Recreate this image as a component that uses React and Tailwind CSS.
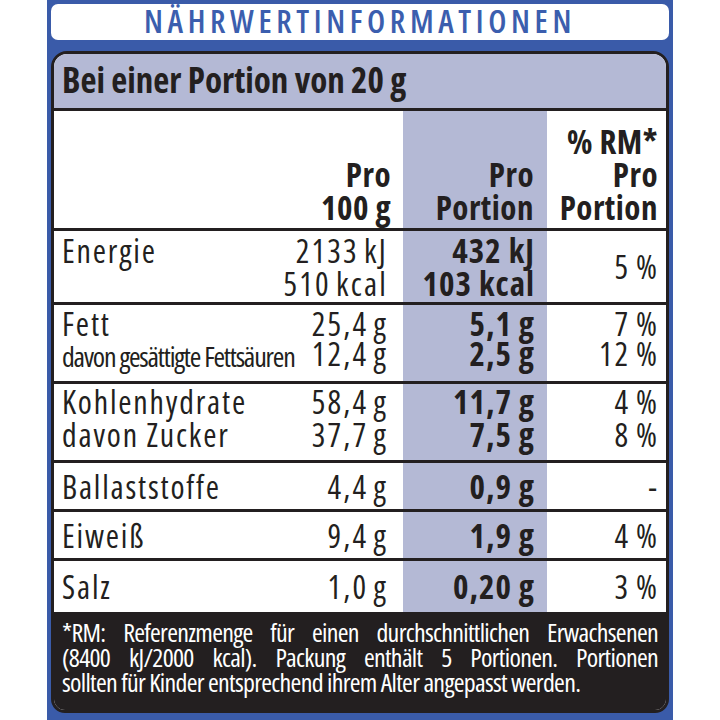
const rows = [
  {
    label: ["Energie"],
    per100: ["2133 kJ", "510 kcal"],
    portion: ["432 kJ", "103 kcal"],
    rm: "5 %",
    h: "h-[71px] pt-[3px]",
    lead: "leading-[33px]",
  },
  {
    label: ["Fett", "davon gesättigte Fettsäuren"],
    per100: ["25,4 g", "12,4 g"],
    portion: ["5,1 g", "2,5 g"],
    rm: ["7 %", "12 %"],
    h: "h-[76px] pt-[4px]",
    lead: "leading-[30px]",
    small: true,
  },
  {
    label: ["Kohlenhydrate", "davon Zucker"],
    per100: ["58,4 g", "37,7 g"],
    portion: ["11,7 g", "7,5 g"],
    rm: ["4 %", "8 %"],
    h: "h-[76px] pt-[1px]",
    lead: "leading-[33px]",
  },
  { label: ["Ballaststoffe"], per100: ["4,4 g"], portion: ["0,9 g"], rm: ["-"], h: "h-[46px] items-center", lead: "leading-[33px]" },
  { label: ["Eiweiß"], per100: ["9,4 g"], portion: ["1,9 g"], rm: ["4 %"], h: "h-[46px] items-center", lead: "leading-[33px]" },
  { label: ["Salz"], per100: ["1,0 g"], portion: ["0,20 g"], rm: ["3 %"], h: "h-[51px] items-center", lead: "leading-[33px]" },
];

const note = [
  "*RM: Referenzmenge für einen durchschnittlichen Erwachsenen",
  "(8400 kJ/2000 kcal). Packung enthält 5 Portionen. Portionen",
  "sollten für Kinder entsprechend ihrem Alter angepasst werden.",
];

function Row({ r }) {
  return (
    <div className="flex border-t-[3px] border-[#231f20] text-[32px] text-[#231f20] font-stretch-[75%]">
      <div className={`flex w-[349px] justify-between pl-[8px] pr-[15px] ${r.h} ${r.lead}`}>
        <div className="tracking-[1.8px]">
          {r.label.map((l, i) =>
            r.small && i === 1 ? (
              <div key={i} className="text-[28px] leading-[34px] tracking-[-1.2px]">
                {l}
              </div>
            ) : (
              <div key={i}>{l}</div>
            )
          )}
        </div>
        <div className="text-right tracking-[2.2px] [word-spacing:-3px]">
          {r.per100.map((v) => (
            <div key={v}>{v}</div>
          ))}
        </div>
      </div>
      <div
        className={`flex w-[144px] justify-end bg-[#b4b9d5] pr-[12px] text-[33px] font-bold tracking-[1px] ${r.h} ${r.lead}`}
      >
        <div className="text-right">
          {r.portion.map((v) => (
            <div key={v}>{v}</div>
          ))}
        </div>
      </div>
      <div
        className={`flex w-[119px] justify-end pr-[7px] tracking-[2px] [word-spacing:-2px] ${r.lead} ${
          Array.isArray(r.rm) ? r.h : "h-[71px] items-center"
        }`}
      >
        <div className="text-right">
          {Array.isArray(r.rm) ? r.rm.map((v) => <div key={v}>{v}</div>) : <div>{r.rm}</div>}
        </div>
      </div>
    </div>
  );
}

export default function App() {
  return (
    <div className="h-[720px] w-[720px] bg-white font-['Open_Sans','Liberation_Sans',sans-serif]">
      <div className="ml-[47px] flex h-[720px] w-[626px] flex-col bg-[#3a5ba9] px-[4px] pt-[4px]">
        <div className="h-[36px] rounded-[7px] bg-white text-center text-[32px] font-semibold leading-[34px] tracking-[4.6px] text-[#3b5eae] font-stretch-[75%]">
          NÄHRWERTINFORMATIONEN
        </div>
        <div className="mt-[11px] overflow-hidden rounded-t-[16px] rounded-b-[14px] border-[3px] border-[#231f20] bg-white">
          <div className="h-[54px] bg-[#b4b9d5] pl-[8px] text-[35px] font-bold leading-[52px] text-[#231f20] font-stretch-[75%]">
            Bei einer Portion von 20 g
          </div>
          <div className="flex h-[120px] border-t-[3px] border-[#231f20] pb-[4px] text-[33px] font-bold leading-[33px] text-[#231f20] font-stretch-[75%] tracking-[0.5px]">
            <div className="flex w-[349px] items-end justify-end pr-[12px] text-right">
              <div>
                Pro
                <br />
                100 g
              </div>
            </div>
            <div className="-mb-[4px] flex w-[144px] items-end justify-end bg-[#b4b9d5] pb-[4px] pr-[13px] text-right">
              <div>
                Pro
                <br />
                Portion
              </div>
            </div>
            <div className="flex w-[119px] items-end justify-end pr-[8px] text-right">
              <div>
                % RM*
                <br />
                Pro
                <br />
                Portion
              </div>
            </div>
          </div>
          {rows.map((r, i) => (
            <Row key={i} r={r} />
          ))}
          <div className="h-[98px] bg-[#231f20] px-[8px] pt-[8px] text-[26px] leading-[25px] tracking-[-0.7px] text-white font-stretch-[75%]">
            {note.map((l, i) => (
              <div key={i} className={`whitespace-nowrap ${i < 2 ? "text-justify [text-align-last:justify]" : ""}`}>
                {l}
              </div>
            ))}
          </div>
        </div>
      </div>
    </div>
  );
}
